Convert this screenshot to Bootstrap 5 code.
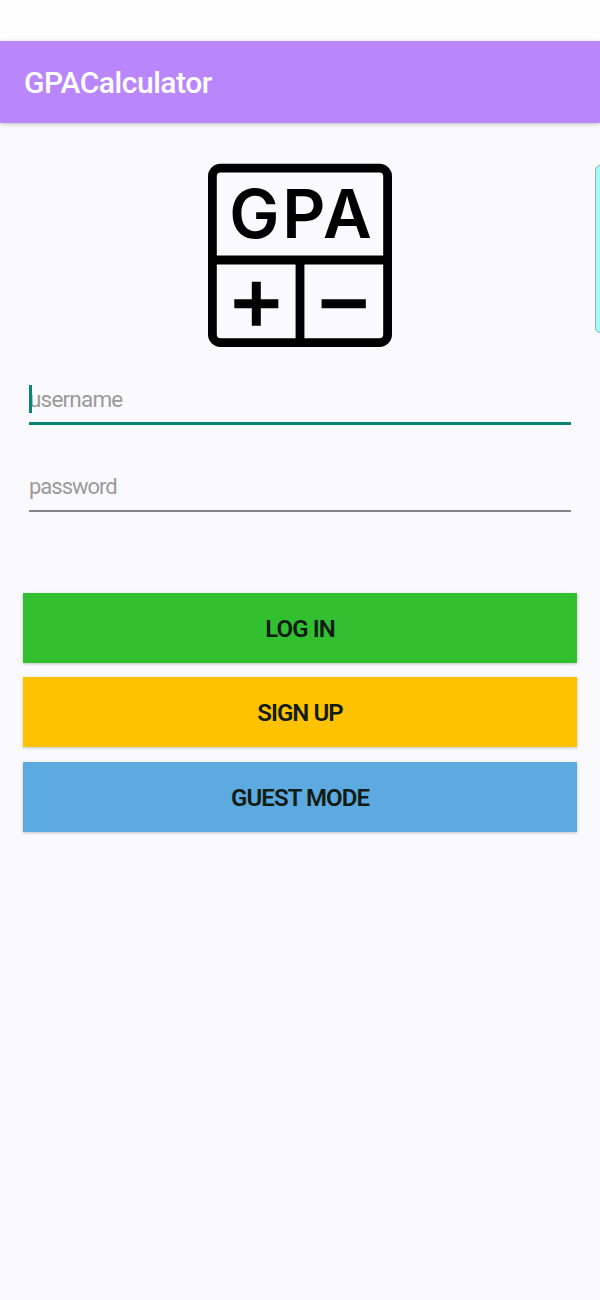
<!DOCTYPE html>
<html lang="en">
<head>
<meta charset="utf-8">
<meta name="viewport" content="width=device-width, initial-scale=1">
<title>GPACalculator</title>
<link href="https://cdn.jsdelivr.net/npm/bootstrap@5.3.0/dist/css/bootstrap.min.css" rel="stylesheet">
<style>
body{background:#faf9fc;font-family:Roboto,"Noto Sans",sans-serif;min-height:1300px;overflow-x:hidden}
.status-strip{height:41px;background:#fefefe}
.app-bar{height:82px;background:#ba86fc;box-shadow:0 1px 4px rgba(0,0,0,.25);padding:2px 24px 0}
.app-title{font-size:30px;font-weight:500;line-height:1;color:#fff;letter-spacing:-.45px}
.logo{width:184px;height:184px;margin:40px auto 0}
.field{height:50px;margin:0 29px;padding:2px 0 1px;border:0;border-bottom:2px solid #858488;border-radius:0;background:transparent!important;font-size:22.5px;line-height:28px;letter-spacing:-.8px;width:542px}
.field::placeholder{color:#9b9a9d;opacity:1}
.field-active{height:47px;padding:0 0 3px;border-bottom:3px solid #0b8573}
.field-wrap{margin-top:31px;height:47px}
.field-next{margin-top:37px;font-size:22px;letter-spacing:-1px}
.caret{left:29px;top:7px;width:3px;height:28px;background:#0b8573}
.actions{padding:0 23px;gap:14.3px;margin-top:81px}
.action{height:70px;border:0;border-radius:0;padding-top:8px;font-size:24px;font-weight:600;line-height:1;color:#101c14!important;box-shadow:0 1px 3px rgba(0,0,0,.22);letter-spacing:-.9px}
.login{background:#32c031!important}.signup{background:#ffc200!important}.guest{background:#5caae0!important}
.edge-clip{width:8px}
.edge-panel{right:-10px;top:165px;width:15px;height:168px;border:1px solid #92b2b8;border-radius:5px;background:#a4fafa}
</style>
</head>
<body class="position-relative">
<div class="status-strip"></div>
<header class="app-bar d-flex align-items-center"><h1 class="app-title mb-0">GPACalculator</h1></header>
<main>
<svg class="logo d-block" viewBox="0 0 184 184" role="img" aria-label="GPA">
<rect x="4.4" y="5.2" width="175.2" height="174.4" rx="8" fill="none" stroke="#000" stroke-width="8.8"/>
<path d="M4 97H180M92 96V180" stroke="#000" stroke-width="8.8"/>
<path d="M26.3 140.7H70.3M48.3 118.7V162.7M113.6 140.7H157.8" stroke="#000" stroke-width="9"/>
<text x="21.2" y="74.7" font-family="Inter, sans-serif" font-size="67" font-weight="600" textLength="142.5" lengthAdjust="spacing">GPA</text>
</svg>
<form class="d-flex flex-column">
<div class="field-wrap position-relative"><input class="field field-active form-control shadow-none" placeholder="username" aria-label="username"><span class="caret position-absolute"></span></div>
<input class="field field-next form-control shadow-none" type="password" placeholder="password" aria-label="password">
<div class="actions d-grid">
<button type="button" class="btn action login">LOG IN</button>
<button type="button" class="btn action signup">SIGN UP</button>
<button type="button" class="btn action guest">GUEST MODE</button>
</div>
</form>
</main>
<div class="edge-clip position-absolute top-0 end-0 h-100 overflow-hidden pe-none"><div class="edge-panel position-absolute"></div></div>
<script src="https://cdn.jsdelivr.net/npm/bootstrap@5.3.0/dist/js/bootstrap.bundle.min.js"></script>
</body>
</html>
